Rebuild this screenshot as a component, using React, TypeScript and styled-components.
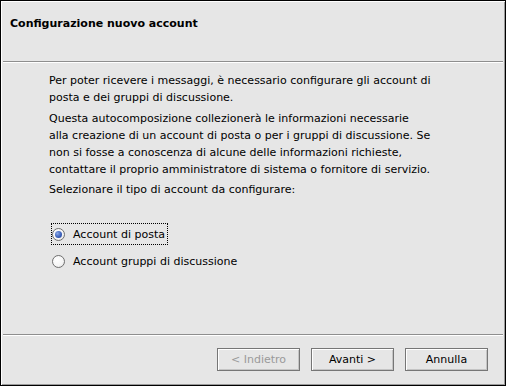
import React from "react";
import styled, { createGlobalStyle } from "styled-components";

const Global = createGlobalStyle`
  html, body { margin: 0; padding: 0; background: #e6e6e6; }
  body { font-family: "DejaVu Sans", "Liberation Sans", sans-serif; }
`;

const Window = styled.div`
  width: 506px;
  height: 386px;
  box-sizing: border-box;
  border: 1px solid #000;
  background: #e6e6e6;
  box-shadow: inset 1px 1px 0 #ffffff, inset -1px -1px 0 #9a9a9a;
  display: flex;
  flex-direction: column;
  color: #000;
  font-size: 11px;
`;

const Header = styled.div`
  height: 60px;
  box-sizing: border-box;
  padding: 16px 0 0 9px;
`;

const Title = styled.div`
  font-weight: bold;
  font-size: 11px;
  line-height: 14px;
`;

const Separator = styled.div`
  margin: 0 2px;
  border-top: 1px solid #8e8e8e;
  border-bottom: 1px solid #ffffff;
`;

const Body = styled.div`
  flex: 1;
  padding: 9px 0 0 48px;
  display: flex;
  flex-direction: column;
`;

const Para = styled.p<{ $gap?: number }>`
  margin: ${(p) => p.$gap ?? 0}px 0 0 0;
  line-height: 17px;
  white-space: nowrap;
`;

const RadioGroup = styled.div`
  margin-top: 25px;
  display: flex;
  flex-direction: column;
  gap: 5px;
`;

const RadioRow = styled.label<{ $focused?: boolean }>`
  display: flex;
  align-items: center;
  align-self: flex-start;
  gap: 8px;
  height: 22px;
  box-sizing: border-box;
  padding: 0 2px 0 0;
  margin-left: 2px;
  border: 1px dotted ${(p) => (p.$focused ? "#000" : "transparent")};
`;

const RadioCircle = styled.span<{ $checked?: boolean }>`
  width: 13px;
  height: 13px;
  box-sizing: border-box;
  border-radius: 50%;
  border: 1px solid #6f6f6f;
  background: radial-gradient(circle at 35% 35%, #ffffff 0%, #f4f4f4 60%, #d8d8d8 100%);
  display: flex;
  align-items: center;
  justify-content: center;
  &::after {
    content: "";
    display: ${(p) => (p.$checked ? "block" : "none")};
    width: 7px;
    height: 7px;
    border-radius: 50%;
    background: radial-gradient(circle at 35% 35%, #8aa8e6 0%, #3e63bd 55%, #233f8a 100%);
  }
`;

const Footer = styled.div`
  display: flex;
  justify-content: flex-end;
  gap: 11px;
  padding: 12px 17px 14px 0;
`;

const Button = styled.button<{ $disabled?: boolean }>`
  width: 83px;
  height: 23px;
  box-sizing: border-box;
  border: 1px solid #767676;
  background: #e6e6e6;
  box-shadow: inset 1px 1px 0 #ffffff, inset -1px -1px 0 #c4c4c4;
  font-family: "DejaVu Sans", "Liberation Sans", sans-serif;
  font-size: 11px;
  color: ${(p) => (p.$disabled ? "#9a9a9a" : "#000")};
  padding: 0;
  margin: 0;
`;

export default function App() {
  return (
    <>
      <Global />
      <Window>
        <Header>
          <Title>Configurazione nuovo account</Title>
        </Header>
        <Separator />
        <Body>
          <Para>
            Per poter ricevere i messaggi, è necessario configurare gli account di
            <br />
            posta e dei gruppi di discussione.
          </Para>
          <Para $gap={4}>
            Questa autocomposizione collezionerà le informazioni necessarie
            <br />
            alla creazione di un account di posta o per i gruppi di discussione. Se
            <br />
            non si fosse a conoscenza di alcune delle informazioni richieste,
            <br />
            contattare il proprio amministratore di sistema o fornitore di servizio.
          </Para>
          <Para $gap={3}>Selezionare il tipo di account da configurare:</Para>
          <RadioGroup>
            <RadioRow $focused>
              <RadioCircle $checked />
              Account di posta
            </RadioRow>
            <RadioRow>
              <RadioCircle />
              Account gruppi di discussione
            </RadioRow>
          </RadioGroup>
        </Body>
        <Separator />
        <Footer>
          <Button $disabled>&lt; Indietro</Button>
          <Button>Avanti &gt;</Button>
          <Button>Annulla</Button>
        </Footer>
      </Window>
    </>
  );
}
